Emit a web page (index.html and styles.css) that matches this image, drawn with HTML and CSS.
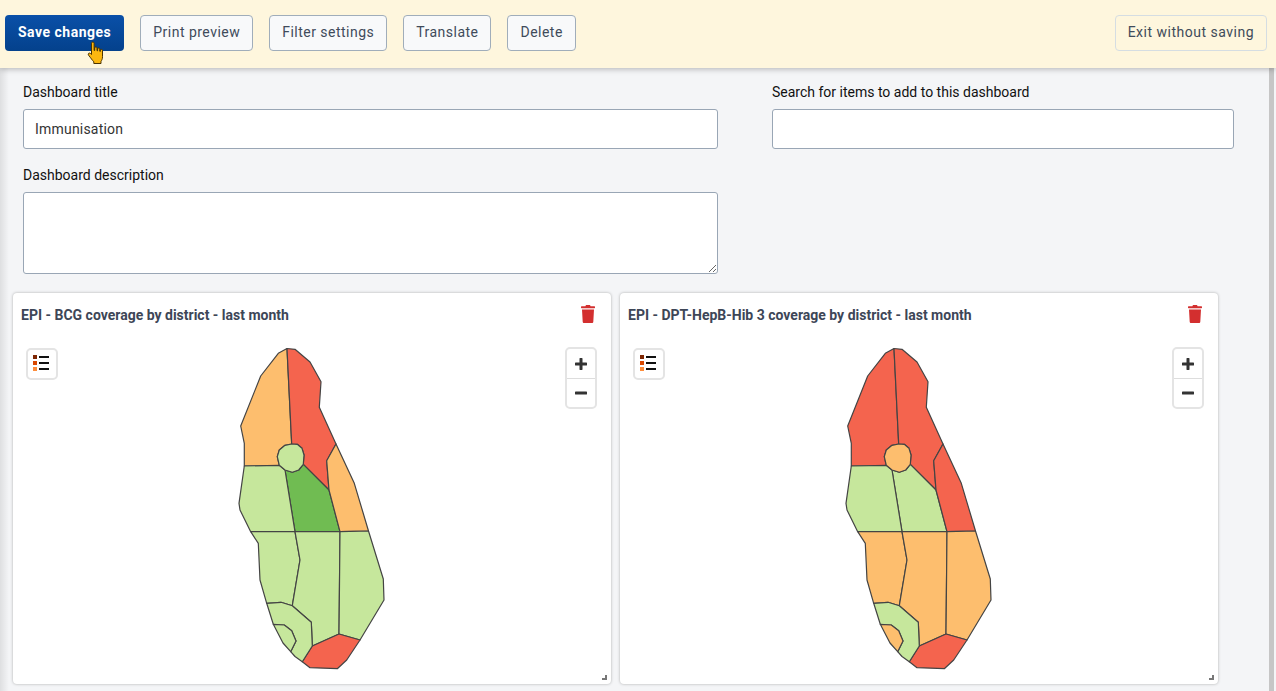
FILE: index.html
```html
<!DOCTYPE html>
<html lang="en">
<head>
    <meta charset="UTF-8">
    <meta name="viewport" content="width=device-width, initial-scale=1.0">
    <title>Edit dashboard</title>
    <link rel="stylesheet" href="styles.css">
</head>
<body>

    <div class="topbar">
        <button class="btn btn-primary">Save changes</button>
        <button class="btn">Print preview</button>
        <button class="btn">Filter settings</button>
        <button class="btn">Translate</button>
        <button class="btn">Delete</button>
        <button class="btn btn-exit">Exit without saving</button>
    </div>

    <svg class="hand-cursor" width="20" height="24" viewBox="0 0 20 24">
        <path d="M5.5 2.2c0-1.600 2.600-1.600 2.600 0v7.300l.6-.1V6.900c0-1.300 2.300-1.300 2.300 0v2.800l.6.100V7.900c0-1.200 2.200-1.200 2.200 0v2.400l.6.100V9.200c0-1.100 2.100-1.100 2.100.2v6.300c0 2.500-.8 3.600-1.500 4.800v2H7.800v-1.700c-1.500-1.500-3-3.800-5.300-6.700-1-1.300.7-2.800 2-1.600l1 1z" fill="#fbb710" stroke="#4a3300" stroke-width="1"/>
    </svg>

    <div class="main">
        <div class="form-grid">
            <div class="field">
                <label>Dashboard title</label>
                <input type="text" value="Immunisation">
            </div>
            <div class="field">
                <label>Search for items to add to this dashboard</label>
                <input type="text">
            </div>
            <div class="field">
                <label>Dashboard description</label>
                <textarea></textarea>
            </div>
        </div>

        <div class="cards">
            <div class="card">
                <div class="card-header">
                    <span class="card-title">EPI - BCG coverage by district - last month</span>
                    <svg class="trash" width="14" height="18" viewBox="0 0 14 18">
                        <path d="M5 0h4l.6 1.200H13.400c.4 0 .6.300.6.600v1c0 .3-.2.500-.6.500H.6C.2 3.300 0 3.100 0 2.800v-1c0-.3.200-.6.600-.6h3.800zM1 4.500h12l-.7 12.200c0 .7-.6 1.300-1.300 1.300H3c-.7 0-1.300-.6-1.300-1.300z"/>
                    </svg>
                </div>
                <div class="map">
                    <div class="legend-btn">
                        <svg width="18" height="18" viewBox="0 0 18 18">
                            <rect x="0" y="0" width="4" height="4" fill="#7f2704"/>
                            <rect x="0" y="6" width="4" height="4" fill="#d94801"/>
                            <rect x="0" y="12" width="4" height="4" fill="#fd8d3c"/>
                            <rect x="6" y="1" width="10" height="2" fill="#111"/>
                            <rect x="6" y="7" width="10" height="2" fill="#111"/>
                            <rect x="6" y="13" width="10" height="2" fill="#111"/>
                        </svg>
                    </div>
                    <div class="zoom-ctrl">
                        <div class="zoom-btn">
                            <svg width="12" height="12" viewBox="0 0 12 12"><path d="M6 1v10M1 6h10"/></svg>
                        </div>
                        <div class="zoom-btn">
                            <svg width="12" height="12" viewBox="0 0 12 12"><path d="M1 6h10"/></svg>
                        </div>
                    </div>
                    <svg class="map-svg" width="598" height="348" viewBox="13 336 598 348">
                        <path class="orange" d="M287 348.500 278.300 353.300 260.700 376 240.700 426 244.300 443.300 244.300 466 279.300 465.300 277.300 456.700 279.300 450 285 445.300 291.700 444z"/>
                        <path class="red" d="M287 348.500 295 349.300 310 362 321 381.700 319.300 407.300 336 444 326.700 460.700 329 490 303.300 464.300 304 455 302 448.300 297.300 444.300 291.700 444z"/>
                        <path class="dark" d="M285 470 292.300 472.300 298.700 470 303.300 464.300 329 490 340 531.700 295 531.700z"/>
                        <path class="orange" d="M336 444 354.300 483.300 368.500 531 340 531.700 329 490 326.700 460.700z"/>
                        <path class="light" d="M244.300 466 279.300 465.300 285 470 295 531.700 250.700 531.700 240 510 239 503.300z"/>
                        <path class="light" d="M250.700 531.700 295 531.700 300 560 292.300 605.700 281 602.300 266.700 603.300 260 580 258.300 543.300z"/>
                        <path class="light" d="M295 531.700 340 531.700 339 634 312.300 646 311.300 622.300 292.300 605.700 300 560z"/>
                        <path class="light" d="M340 531.700 368.500 531 383.300 579 384 600 360 640 339 634z"/>
                        <path class="red" d="M339 634 360 640 346.700 660 337.300 668.700 310 667.700 302.300 661.700 312.300 646z"/>
                        <path class="light" d="M266.700 603.300 281 602.300 292.300 605.700 311.300 622.300 312.300 646 302.300 661.700 295 656.500 290.700 651.700 296 641 291.700 630.700 284.300 625 273.300 624.300z"/>
                        <path class="light" d="M273.300 624.300 284.300 625 291.700 630.700 296 641 290.700 651.700 283 643z"/>
                        <path class="light" d="M291.700 444 297.300 444.300 302 448.300 304 455 303.300 464.300 298.700 470 292.300 472.300 285 470 279.300 465.300 277.300 456.700 279.300 450 285 445.300z"/>
                    </svg>
                    <span class="resize-handle"></span>
                </div>
            </div>

            <div class="card">
                <div class="card-header">
                    <span class="card-title">EPI - DPT-HepB-Hib 3 coverage by district - last month</span>
                    <svg class="trash" width="14" height="18" viewBox="0 0 14 18">
                        <path d="M5 0h4l.6 1.200H13.400c.4 0 .6.300.6.600v1c0 .3-.2.500-.6.500H.6C.2 3.300 0 3.100 0 2.800v-1c0-.3.200-.6.600-.6h3.800zM1 4.500h12l-.7 12.200c0 .7-.6 1.300-1.300 1.300H3c-.7 0-1.300-.6-1.300-1.300z"/>
                    </svg>
                </div>
                <div class="map">
                    <div class="legend-btn">
                        <svg width="18" height="18" viewBox="0 0 18 18">
                            <rect x="0" y="0" width="4" height="4" fill="#7f2704"/>
                            <rect x="0" y="6" width="4" height="4" fill="#d94801"/>
                            <rect x="0" y="12" width="4" height="4" fill="#fd8d3c"/>
                            <rect x="6" y="1" width="10" height="2" fill="#111"/>
                            <rect x="6" y="7" width="10" height="2" fill="#111"/>
                            <rect x="6" y="13" width="10" height="2" fill="#111"/>
                        </svg>
                    </div>
                    <div class="zoom-ctrl">
                        <div class="zoom-btn">
                            <svg width="12" height="12" viewBox="0 0 12 12"><path d="M6 1v10M1 6h10"/></svg>
                        </div>
                        <div class="zoom-btn">
                            <svg width="12" height="12" viewBox="0 0 12 12"><path d="M1 6h10"/></svg>
                        </div>
                    </div>
                    <svg class="map-svg" width="598" height="348" viewBox="13 336 598 348">
                        <path class="red" d="M287 348.500 278.300 353.300 260.700 376 240.700 426 244.300 443.300 244.300 466 279.300 465.300 277.300 456.700 279.300 450 285 445.300 291.700 444z"/>
                        <path class="red" d="M287 348.500 295 349.300 310 362 321 381.700 319.300 407.300 336 444 326.700 460.700 329 490 303.300 464.300 304 455 302 448.300 297.300 444.300 291.700 444z"/>
                        <path class="light" d="M285 470 292.300 472.300 298.700 470 303.300 464.300 329 490 340 531.700 295 531.700z"/>
                        <path class="red" d="M336 444 354.300 483.300 368.500 531 340 531.700 329 490 326.700 460.700z"/>
                        <path class="light" d="M244.300 466 279.300 465.300 285 470 295 531.700 250.700 531.700 240 510 239 503.300z"/>
                        <path class="orange" d="M250.700 531.700 295 531.700 300 560 292.300 605.700 281 602.300 266.700 603.300 260 580 258.300 543.300z"/>
                        <path class="orange" d="M295 531.700 340 531.700 339 634 312.300 646 311.300 622.300 292.300 605.700 300 560z"/>
                        <path class="orange" d="M340 531.700 368.500 531 383.300 579 384 600 360 640 339 634z"/>
                        <path class="red" d="M339 634 360 640 346.700 660 337.300 668.700 310 667.700 302.300 661.700 312.300 646z"/>
                        <path class="light" d="M266.700 603.300 281 602.300 292.300 605.700 311.300 622.300 312.300 646 302.300 661.700 295 656.500 290.700 651.700 296 641 291.700 630.700 284.300 625 273.300 624.300z"/>
                        <path class="orange" d="M273.300 624.300 284.300 625 291.700 630.700 296 641 290.700 651.700 283 643z"/>
                        <path class="orange" d="M291.700 444 297.300 444.300 302 448.300 304 455 303.300 464.300 298.700 470 292.300 472.300 285 470 279.300 465.300 277.300 456.700 279.300 450 285 445.300z"/>
                    </svg>
                    <span class="resize-handle"></span>
                </div>
            </div>
        </div>
    </div>

    <div class="scrollbar"></div>
    <div class="left-shade"></div>

</body>
</html>
```

FILE: styles.css
```css
html, body {
    height: 100%;
    overflow: hidden;
}

body {
    margin: 0;
    font-family: Roboto, Arial, sans-serif;
    font-size: 14px;
    background-color: #f4f5f7;
    color: #111;
}

.topbar {
    position: relative;
    z-index: 2;
    display: flex;
    gap: 16px;
    align-items: flex-start;
    height: 68px;
    box-sizing: border-box;
    padding: 15px 9px 0 5px;
    background-color: #fef6dd;
    box-shadow: 0 1px 6px rgba(0, 0, 0, 0.28);
}

.btn {
    height: 36px;
    padding: 0 12px 2px;
    font-family: inherit;
    font-size: 14px;
    letter-spacing: 0.48px;
    color: #404b5a;
    background-color: #f8f9fa;
    border: 1px solid #a0adba;
    border-radius: 4px;
}

.btn-primary {
    padding: 0 13px 2px;
    font-weight: 700;
    letter-spacing: 0.5px;
    color: white;
    background: linear-gradient(#0a50a8, #04418c);
    border: none;
}

.btn-exit {
    margin-left: auto;
    letter-spacing: 0.5px;
    background-color: #fef6dd;
    border-color: #d5dde2;
}

.hand-cursor {
    position: absolute;
    z-index: 3;
    left: 86px;
    top: 41px;
}

.main {
    padding: 14px 0 0 13px;
}

.form-grid {
    display: grid;
    grid-template-columns: 695px 462px;
    column-gap: 54px;
    row-gap: 16px;
    padding-left: 10px;
}

.field label {
    display: block;
    height: 20px;
    margin-bottom: 7px;
    line-height: 20px;
}

.field input, .field textarea {
    display: block;
    width: 100%;
    box-sizing: border-box;
    padding: 0 11px;
    font-family: inherit;
    font-size: 14px;
    letter-spacing: 0.2px;
    color: #333;
    background: white;
    border: 1px solid #99a6b5;
    border-radius: 3px;
}

.field input {
    height: 40px;
}

.field textarea {
    height: 82px;
}

.cards {
    display: flex;
    gap: 9px;
    margin-top: 19px;
}

.card {
    width: 598px;
    height: 391px;
    background: white;
    border-radius: 4px;
    box-shadow: 0 0 3px rgba(0, 0, 0, 0.3);
}

.card-header {
    display: flex;
    justify-content: space-between;
    align-items: center;
    height: 43px;
    box-sizing: border-box;
    padding: 0 16px 0 8px;
}

.card-title {
    font-weight: 700;
    font-size: 14px;
    color: #3d4657;
}

.trash {
    margin-top: -1px;
    fill: #d32f2f;
}

.map {
    position: relative;
    height: 348px;
}

.map-svg {
    display: block;
}

.map-svg path {
    stroke: #444;
    stroke-width: 1.2;
    stroke-linejoin: round;
}

.red { fill: #f4644e; }
.orange { fill: #fdbe6e; }
.light { fill: #c6e79c; }
.dark { fill: #70bc52; }

.legend-btn {
    position: absolute;
    left: 13px;
    top: 12px;
    display: flex;
    align-items: center;
    justify-content: center;
    width: 32px;
    height: 32px;
    box-sizing: border-box;
    background: white;
    border: 2px solid #e4e4e4;
    border-radius: 5px;
}

.zoom-ctrl {
    position: absolute;
    left: 552px;
    top: 11px;
    width: 32px;
    box-sizing: border-box;
    background: white;
    border: 2px solid #e4e4e4;
    border-radius: 5px;
}

.zoom-btn {
    display: flex;
    align-items: center;
    justify-content: center;
    height: 29px;
}

.zoom-btn + .zoom-btn {
    height: 28px;
    border-top: 1px solid #ddd;
}

.zoom-btn path {
    fill: none;
    stroke: #333;
    stroke-width: 3;
    stroke-linecap: round;
}

.resize-handle {
    position: absolute;
    right: 4px;
    bottom: 4px;
    width: 3px;
    height: 3px;
    border-right: 2px solid #777;
    border-bottom: 2px solid #777;
}

.scrollbar {
    position: absolute;
    z-index: 1;
    top: 68px;
    right: 2px;
    bottom: 0;
    width: 5px;
    background-color: #c6c6c6;
}

.left-shade {
    position: absolute;
    z-index: 1;
    left: 0;
    top: 0;
    bottom: 0;
    width: 9px;
    background: linear-gradient(to right, rgba(0, 0, 0, 0.09), rgba(0, 0, 0, 0));
    pointer-events: none;
}
```
